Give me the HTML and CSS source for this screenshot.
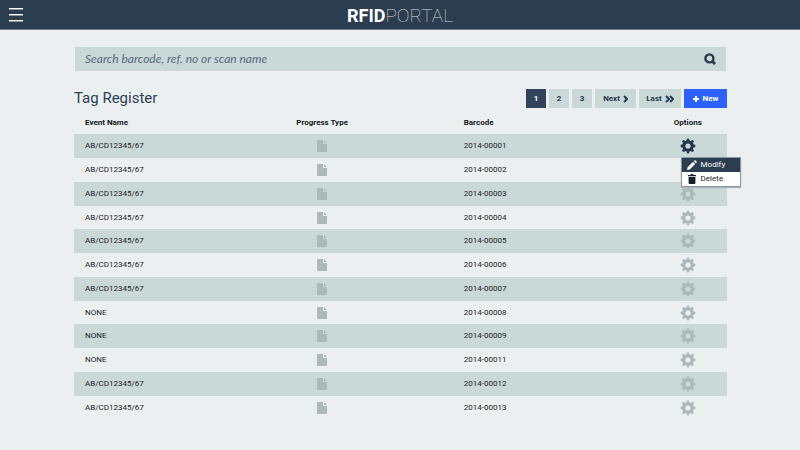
FILE: index.html
```html
<!DOCTYPE html>
<html lang="en">
<head>
<meta charset="utf-8">
<meta name="viewport" content="width=device-width, initial-scale=1">
<title>RFID Portal</title>
<link rel="stylesheet" href="styles.css">
</head>
<body>
<svg class="sprite" aria-hidden="true">
  <symbol id="doc" viewBox="0 0 10 12"><path d="M1 0H6V4H10V11Q10 12 9 12H1Q0 12 0 11V1Q0 0 1 0ZM7 0L10 3H7Z"/></symbol>
  <symbol id="gear" viewBox="0 0 16 16">
    <circle cx="8" cy="8" r="4.2" fill="none" stroke="currentColor" stroke-width="3.2"/>
    <path fill="none" stroke="currentColor" stroke-width="2.8" stroke-linecap="round" d="M8 1.9V3M8 13v1.1M1.9 8H3M13 8h1.1M3.6 3.6l.9.9M11.5 11.5l.9.9M12.4 3.6l-.9.9M4.5 11.5l-.9.9"/>
  </symbol>
</svg>
<header class="topbar">
  <button class="burger" type="button" aria-label="Menu"><span></span><span></span><span></span></button>
  <a class="logo" href="#"><b>RFID</b>PORTAL</a>
</header>
<main class="page">
  <form class="search" role="search">
    <input type="search" aria-label="Search" placeholder="Search barcode, ref. no or scan name">
    <button type="button" aria-label="Search">
      <svg class="lens" viewBox="0 0 12 12" width="12" height="12"><circle cx="5.4" cy="5.4" r="4" stroke-width="2.4"/><path d="M7.8 7.8l3.2 3.2" stroke-width="2.8"/></svg>
    </button>
  </form>
  <div class="toolbar">
    <h1>Tag Register</h1>
    <nav class="pager" aria-label="Pages">
      <button class="num current" type="button">1</button>
      <button class="num" type="button">2</button>
      <button class="num" type="button">3</button>
      <button class="step" type="button">Next <svg viewBox="0 0 5 8" width="5" height="8"><path d="M1 1l3 3-3 3"/></svg></button>
      <button class="step last" type="button">Last <svg viewBox="0 0 9 8" width="9" height="8"><path d="M1 1l3 3-3 3M5 1l3 3-3 3"/></svg></button>
      <button class="new" type="button"><svg viewBox="0 0 6 6" width="6" height="6"><path d="M3 0v6M0 3h6"/></svg> New</button>
    </nav>
  </div>
  <table class="tags">
    <thead><tr><th class="event">Event Name</th><th class="progress">Progress Type</th><th class="code">Barcode</th><th class="options">Options</th></tr></thead>
    <tbody>
      <tr><td>AB/CD12345/67</td><td class="progress"><svg class="doc"><use href="#doc"/></svg></td><td>2014-00001</td>
        <td class="options"><button class="gear open" type="button" aria-label="Options" aria-expanded="true"><svg><use href="#gear"/></svg></button>
          <div class="menu">
            <button class="active" type="button"><svg viewBox="0 0 10 10" width="10" height="10"><path d="M0 10L.6 7.2 6 1.8 8.2 4 2.8 9.4ZM6.7 1.1L7.5.3Q8 0 8.5.4L9.6 1.5Q10 2 9.7 2.5L8.9 3.3Z"/></svg>Modify</button>
            <button type="button"><svg viewBox="0 0 10 10" width="10" height="10"><path d="M1 1H3.3L4 0H6L6.7 1H9V2.3H1ZM1.6 3H8.4V9Q8.4 10 7.4 10H2.6Q1.6 10 1.6 9Z"/></svg>Delete</button>
          </div></td></tr>
      <tr><td>AB/CD12345/67</td><td class="progress"><svg class="doc"><use href="#doc"/></svg></td><td>2014-00002</td><td class="options"><button class="gear" type="button" aria-label="Options"><svg><use href="#gear"/></svg></button></td></tr>
      <tr><td>AB/CD12345/67</td><td class="progress"><svg class="doc"><use href="#doc"/></svg></td><td>2014-00003</td><td class="options"><button class="gear" type="button" aria-label="Options"><svg><use href="#gear"/></svg></button></td></tr>
      <tr><td>AB/CD12345/67</td><td class="progress"><svg class="doc"><use href="#doc"/></svg></td><td>2014-00004</td><td class="options"><button class="gear" type="button" aria-label="Options"><svg><use href="#gear"/></svg></button></td></tr>
      <tr><td>AB/CD12345/67</td><td class="progress"><svg class="doc"><use href="#doc"/></svg></td><td>2014-00005</td><td class="options"><button class="gear" type="button" aria-label="Options"><svg><use href="#gear"/></svg></button></td></tr>
      <tr><td>AB/CD12345/67</td><td class="progress"><svg class="doc"><use href="#doc"/></svg></td><td>2014-00006</td><td class="options"><button class="gear" type="button" aria-label="Options"><svg><use href="#gear"/></svg></button></td></tr>
      <tr><td>AB/CD12345/67</td><td class="progress"><svg class="doc"><use href="#doc"/></svg></td><td>2014-00007</td><td class="options"><button class="gear" type="button" aria-label="Options"><svg><use href="#gear"/></svg></button></td></tr>
      <tr><td>NONE</td><td class="progress"><svg class="doc"><use href="#doc"/></svg></td><td>2014-00008</td><td class="options"><button class="gear" type="button" aria-label="Options"><svg><use href="#gear"/></svg></button></td></tr>
      <tr><td>NONE</td><td class="progress"><svg class="doc"><use href="#doc"/></svg></td><td>2014-00009</td><td class="options"><button class="gear" type="button" aria-label="Options"><svg><use href="#gear"/></svg></button></td></tr>
      <tr><td>NONE</td><td class="progress"><svg class="doc"><use href="#doc"/></svg></td><td>2014-00011</td><td class="options"><button class="gear" type="button" aria-label="Options"><svg><use href="#gear"/></svg></button></td></tr>
      <tr><td>AB/CD12345/67</td><td class="progress"><svg class="doc"><use href="#doc"/></svg></td><td>2014-00012</td><td class="options"><button class="gear" type="button" aria-label="Options"><svg><use href="#gear"/></svg></button></td></tr>
      <tr><td>AB/CD12345/67</td><td class="progress"><svg class="doc"><use href="#doc"/></svg></td><td>2014-00013</td><td class="options"><button class="gear" type="button" aria-label="Options"><svg><use href="#gear"/></svg></button></td></tr>
    </tbody>
  </table>
</main>
</body>
</html>
```
FILE: styles.css
```css
* { box-sizing: border-box; }
body {
  margin: 0;
  background: #ebeff0;
  color: #1b2226;
  font: 8px/12px Roboto, sans-serif;
}
button {
  margin: 0;
  padding: 0;
  border: 0;
  background: none;
  color: inherit;
  font: inherit;
  cursor: pointer;
}
svg { display: block; fill: currentColor; }
.sprite { position: absolute; width: 0; height: 0; }

.topbar {
  display: grid;
  grid-template-columns: 1fr auto 1fr;
  align-items: center;
  height: 30px;
  padding: 0 9px;
  background: #2c3d50;
  border-bottom: 1px solid #71808b;
  color: #fff;
}
.burger { display: grid; gap: 5px; width: 14px; }
.burger span { height: 1px; background: #fff; box-shadow: 0 1px #8793a0; }
.logo {
  padding-top: 3px;
  color: #d5dade;
  font-size: 19px;
  line-height: 24px;
  font-weight: 100;
  text-decoration: none;
}
.logo b { color: #fff; font-size: 18px; font-weight: 700; }

.page { padding: 17px 73px 0 74px; }
.search {
  display: flex;
  align-items: center;
  height: 24px;
  margin: 0 1px;
  padding: 0 10px;
  background: #cad8d7;
  color: #26394f;
}
.search input {
  flex: 1;
  min-width: 0;
  padding: 0;
  border: 0;
  outline: 0;
  background: none;
  color: #26394f;
  font: italic 12px/20px Lato, sans-serif;
}
.search input::placeholder { color: #526b80; opacity: 1; }
.lens { fill: none; stroke: currentColor; }

.toolbar {
  display: flex;
  align-items: center;
  justify-content: space-between;
  margin-top: 18px;
}
h1 {
  margin: 0;
  color: #2b3f57;
  font-size: 15px;
  line-height: 19px;
  font-weight: 400;
}
.pager { display: flex; gap: 3px; font-weight: 700; color: #26394f; }
.pager button {
  display: flex;
  align-items: center;
  justify-content: center;
  gap: 3px;
  height: 19px;
  background: #cad8d7;
}
.pager svg { fill: none; stroke: currentColor; stroke-width: 2; }
.pager .num { width: 20px; }
.pager .step { width: 41px; }
.pager .last { width: 42px; }
.pager .new { width: 43px; gap: 4px; background: #2c60ff; color: #fff; }
.pager .current { background: #31445b; color: #fff; }

.tags {
  width: 100%;
  margin-top: 4px;
  border-collapse: collapse;
  table-layout: fixed;
}
.tags th, .tags td { padding: 0 11px; text-align: left; vertical-align: middle; }
.tags th { height: 22px; font-weight: 700; color: #12181c; }
.tags td { height: 24px; }
.tags tbody tr:nth-child(4n) td { height: 23px; }
.tags tbody tr:nth-child(odd) { background: #cad8d7; }
.tags .event { width: 18%; }
.tags .progress { width: 40%; text-align: center; }
.tags .code { width: 30%; }
.tags .options { position: relative; width: 12%; padding: 0; text-align: center; }
.doc { width: 10px; height: 12px; margin: 0 auto; color: #adb9b8; }
.gear { display: block; margin: 0 auto; color: #acb9bb; }
.gear svg { width: 16px; height: 16px; }
.gear.open { color: #23364d; }

.menu {
  position: absolute;
  z-index: 1;
  top: 23px;
  left: 32px;
  width: 60px;
  border: 1px solid #8b979d;
  background: #fff;
  box-shadow: 0 1px 1px #a8b2b5;
}
.menu button {
  display: flex;
  align-items: center;
  gap: 4px;
  width: 100%;
  height: 14px;
  padding-left: 5px;
}
.menu .active { background: #2c3d50; color: #fff; }
```
